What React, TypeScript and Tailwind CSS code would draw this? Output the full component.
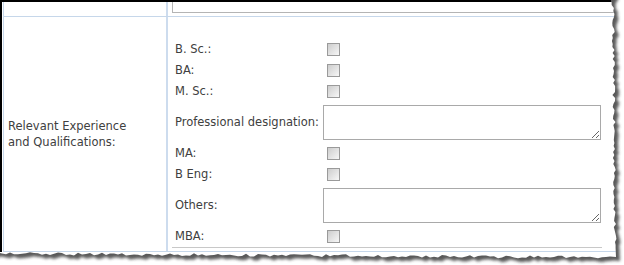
import React from "react";

function makeRnd(seed: number) {
  let s = seed;
  return () => {
    s = (s * 16807) % 2147483647;
    return s / 2147483647;
  };
}

function paperPath(): string {
  const rnd = makeRnd(12345);
  const pts: [number, number][] = [];
  pts.push([-10, -10]);
  for (let y = -10; y <= 250; y += 3) {
    const x = 613 + (y / 250) * 2 + (rnd() - 0.5) * 3;
    pts.push([x, y]);
  }
  pts.push([616, 257]);
  for (let x = 610; x >= -10; x -= 4) {
    const y = 253.5 + (x / 612) * 4 + (rnd() - 0.5) * 3;
    pts.push([x, y]);
  }
  pts.push([-10, 255]);
  return "M" + pts.map(([a, b]) => `${a.toFixed(1)} ${b.toFixed(1)}`).join(" L") + " Z";
}

function TornEdge() {
  const p = paperPath();
  const outside = `M-20 -20 H660 V300 H-20 Z ${p}`;
  return (
    <svg
      className="absolute inset-0 pointer-events-none"
      width={624}
      height={265}
      viewBox="0 0 624 265"
    >
      <defs>
        <filter id="blur" x="-10%" y="-10%" width="120%" height="120%">
          <feGaussianBlur stdDeviation="1.6" />
        </filter>
        <clipPath id="outside">
          <path d={outside} clipRule="evenodd" />
        </clipPath>
      </defs>
      <path d={outside} fill="#ffffff" fillRule="evenodd" />
      <g clipPath="url(#outside)">
        <path d={p} transform="translate(4 4)" fill="#3c3c3c" opacity={0.85} filter="url(#blur)" />
      </g>
    </svg>
  );
}

function Check() {
  return (
    <div className="ml-[4px] shrink-0 w-[13px] h-[13px] border border-[#9a9a9a] bg-linear-to-br from-[#cdcdcd] to-[#f7f7f7]" />
  );
}

function CheckRow({ label }: { label: string }) {
  return (
    <div className="flex items-center h-[21px]">
      <div className="w-[151px] shrink-0 pl-[3px] whitespace-nowrap">{label}</div>
      <Check />
    </div>
  );
}

function AreaRow({ label }: { label: string }) {
  return (
    <div className="flex items-center h-[41px]">
      <div className="w-[151px] shrink-0 pl-[3px] whitespace-nowrap">{label}</div>
      <textarea
        className="w-[278px] h-[35px] shrink-0 border border-[#a9a9a9] bg-white resize"
        readOnly
      />
    </div>
  );
}

export default function App() {
  return (
    <div className="relative w-[624px] h-[265px] bg-white overflow-hidden font-['DejaVu_Sans',sans-serif] text-[11.5px] text-[#404040]">
      <div className="w-[640px] border-t-2 border-l-2 border-black">
        <div className="ml-px border-l border-[#c6d7ea]">
          {/* top row */}
          <div className="flex h-[15px] border-b border-[#c6d7ea]">
            <div className="w-[162px]" />
            <div className="w-[2px] bg-[#cddcee]" />
            <div className="flex-1 pl-[4px]">
              <div className="h-[11px] border border-t-0 border-[#b4b4b4]" />
            </div>
          </div>
          {/* main row */}
          <div className="flex h-[235px] border-b border-[#c6d7ea]">
            <div className="w-[162px] pl-[4px] flex items-center leading-[16px]">
              <div className="whitespace-nowrap">
                Relevant Experience
                <br />
                and Qualifications:
              </div>
            </div>
            <div className="w-[2px] bg-[#cddcee]" />
            <div className="flex-1 pl-[4px]">
              <div className="w-[430px] pt-[22px] border-b border-[#c8c8c8]">
                <CheckRow label="B. Sc.:" />
                <CheckRow label="BA:" />
                <CheckRow label="M. Sc.:" />
                <AreaRow label="Professional designation:" />
                <CheckRow label="MA:" />
                <CheckRow label="B Eng:" />
                <AreaRow label="Others:" />
                <CheckRow label="MBA:" />
              </div>
            </div>
          </div>
        </div>
      </div>
      <TornEdge />
    </div>
  );
}
